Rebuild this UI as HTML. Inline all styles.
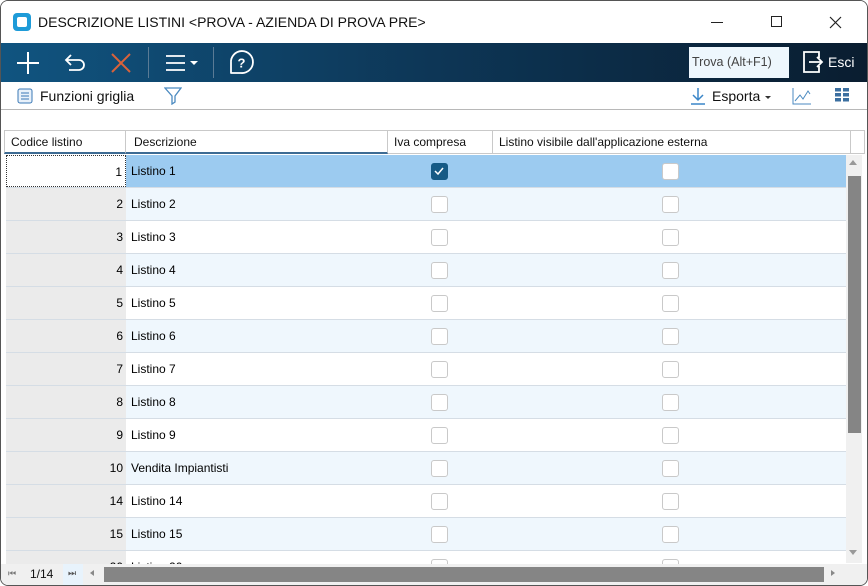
<!DOCTYPE html><html><head><style>
*{margin:0;padding:0;box-sizing:border-box}
body{width:868px;height:586px;background:#fff;font-family:"Liberation Sans","DejaVu Sans",sans-serif;position:relative;overflow:hidden}
.win{position:absolute;left:0;top:0;width:868px;height:586px;border:1px solid #555;border-radius:8px;overflow:hidden;background:#fff}
.abs{position:absolute}
.title{left:0;top:0;width:866px;height:42px;background:#fff}
.tb{left:0;top:42px;width:866px;height:39px;background:linear-gradient(90deg,#105480,#0d3656 50%,#0a1d30)}
.sb{left:0;top:81px;width:866px;height:28px;border-bottom:1px solid #b8b8b8}
.hdr{top:129px;height:24px;font-size:12px;color:#111;border-right:1px solid #c9c9c9;border-top:1px solid #c9c9c9;border-bottom:2px solid #3d6b93;padding:4px 6px;background:#fff}
.row{position:absolute;left:5px;width:840px;height:33px;border-bottom:1px solid #d5dde5;font-size:12px}
.code{position:absolute;left:0;width:120px;height:32px;background:#ebebeb;text-align:right;padding:9px 3px 0 0}
.desc{position:absolute;left:125px;top:9px}
.cb{position:absolute;width:17px;height:17px;border:1.5px solid #c9c9c9;border-radius:3px;background:#fff;top:8px}
</style></head><body><div class="win">
<div class="abs title">
 <div class="abs" style="left:12px;top:12px;width:18px;height:18px;background:#1e9bd8;border-radius:4px"><div class="abs" style="left:4px;top:4px;width:10px;height:10px;background:#fff;border-radius:2px"></div></div>
 <div class="abs" style="left:37px;top:13px;font-size:14px;color:#111">DESCRIZIONE LISTINI &lt;PROVA - AZIENDA DI PROVA PRE&gt;</div>
 <div class="abs" style="left:710px;top:21px;width:12px;height:1px;background:#222"></div>
 <div class="abs" style="left:770px;top:15px;width:11px;height:11px;border:1px solid #222"></div>
 <svg class="abs" style="left:828px;top:15px" width="13" height="13"><path d="M1 1L12 12M12 1L1 12" stroke="#222" stroke-width="1.2"/></svg>
</div>
<div class="abs tb">
 <svg class="abs" style="left:14px;top:7px" width="26" height="26"><path d="M13 2V24M2 13H24" stroke="#fff" stroke-width="2"/></svg>
 <svg class="abs" style="left:62px;top:9px" width="26" height="22"><path d="M8 3L3 8L8 13M3 8H16a5 5 0 0 1 0 10H6" stroke="#fff" stroke-width="1.8" fill="none"/></svg>
 <svg class="abs" style="left:109px;top:9px" width="22" height="22"><path d="M2 2L20 20M20 2L2 20" stroke="#d9623a" stroke-width="2"/></svg>
 <div class="abs" style="left:147px;top:4px;width:1px;height:31px;background:#5a7b95"></div>
 <svg class="abs" style="left:164px;top:10px" width="36" height="20"><path d="M1 3H20M1 10H20M1 17H20" stroke="#fff" stroke-width="1.8"/><path d="M25 8H33L29 12Z" fill="#fff"/></svg>
 <div class="abs" style="left:212px;top:4px;width:1px;height:31px;background:#5a7b95"></div>
 <svg class="abs" style="left:227px;top:6px" width="27" height="27"><path d="M13 24H3V14A11 11 0 1 1 13 24Z" stroke="#fff" stroke-width="1.8" fill="none" stroke-linejoin="round"/><text x="13.5" y="18.5" font-size="13" font-weight="bold" fill="#fff" text-anchor="middle" font-family="Liberation Sans">?</text></svg>
 <div class="abs" style="left:688px;top:4px;width:100px;height:31px;background:#eef7fd;font-size:12.5px;color:#444;padding:8px 3px">Trova (Alt+F1)</div>
 <svg class="abs" style="left:800px;top:7px" width="24" height="24"><path d="M10 2H3V22H18V16M18 8V2H10" stroke="#fff" stroke-width="1.8" fill="none"/><path d="M8 12H21M16 7L21 12L16 17" stroke="#fff" stroke-width="1.8" fill="none"/></svg>
 <div class="abs" style="left:827px;top:11px;font-size:14px;color:#fff">Esci</div>
</div>
<div class="abs sb">
 <svg class="abs" style="left:16px;top:6px" width="16" height="16"><rect x="1" y="1" width="14" height="14" rx="2" stroke="#3a78b5" fill="#e8f1fa"/><path d="M4 5H12M4 8H12M4 11H12" stroke="#3a78b5"/></svg>
 <div class="abs" style="left:39px;top:6px;font-size:14px;color:#111">Funzioni griglia</div>
 <svg class="abs" style="left:163px;top:5px" width="18" height="18"><path d="M1 1H17L11 9V15L8 17V9Z" stroke="#4b8ac0" fill="none" stroke-width="1.3"/></svg>
 <svg class="abs" style="left:688px;top:5px" width="18" height="18"><path d="M9 1V13M4 8L9 13L14 8M2 17H16" stroke="#3a86c8" stroke-width="1.5" fill="none"/></svg>
 <div class="abs" style="left:711px;top:6px;font-size:14px;color:#111">Esporta</div>
 <div class="abs" style="left:764px;top:14px;border:3px solid transparent;border-top:3px solid #333"></div>
 <svg class="abs" style="left:791px;top:5px" width="20" height="18"><path d="M1 1V17H19" stroke="#4b8ac0" fill="none"/><path d="M3 14L8 8L11 12L16 4L18 7" stroke="#4b8ac0" fill="none"/></svg>
 <svg class="abs" style="left:834px;top:6px" width="14" height="14"><rect x="0" y="0" width="6" height="3.5" fill="#3b6fa0"/><rect x="8" y="0" width="6" height="3.5" fill="#3b6fa0"/><rect x="0" y="5" width="6" height="3.5" fill="#3b6fa0"/><rect x="8" y="5" width="6" height="3.5" fill="#3b6fa0"/><rect x="0" y="10" width="6" height="3.5" fill="#3b6fa0"/><rect x="8" y="10" width="6" height="3.5" fill="#3b6fa0"/></svg>
</div>
<div class="abs hdr" style="left:3px;width:122px;border-left:1px solid #c9c9c9">Codice listino</div>
<div class="abs hdr" style="left:125px;width:262px;padding-left:8px">Descrizione</div>
<div class="abs hdr" style="left:387px;width:105px;border-bottom:1px solid #c9c9c9">Iva compresa</div>
<div class="abs hdr" style="left:492px;width:358px;border-bottom:1px solid #c9c9c9">Listino visibile dall'applicazione esterna</div>
<div class="abs hdr" style="left:850px;width:14px;border-bottom:1px solid #c9c9c9"></div>
<div id="rows"></div>
<div class="abs" style="left:845px;top:154px;width:16px;height:408px;background:#f0f0f0"></div>
<div class="abs" style="left:848px;top:159px;border:4px solid transparent;border-bottom:5px solid #999;border-top:0"></div>
<div class="abs" style="left:847px;top:175px;width:13px;height:257px;background:#858585"></div>
<div class="abs" style="left:848px;top:549px;border:4px solid transparent;border-top:5px solid #999;border-bottom:0"></div>
<div class="abs" style="left:0;top:563px;width:866px;height:21px;background:#f0f0f0"></div>
<div class="abs" style="left:7px;top:567px;font-size:9px;color:#777">⏮</div>
<div class="abs" style="left:29px;top:566px;font-size:12px;color:#111">1/14</div>
<div class="abs" style="left:62px;top:563px;width:20px;height:21px;background:#e8f3fc"></div>
<div class="abs" style="left:67px;top:567px;font-size:9px;color:#555">⏭</div>
<div class="abs" style="left:89px;top:569px;border:3px solid transparent;border-right:4px solid #888;border-left:0"></div>
<div class="abs" style="left:103px;top:566px;width:720px;height:15px;background:#858585"></div>
<div class="abs" style="left:830px;top:569px;border:3px solid transparent;border-left:4px solid #888;border-right:0"></div>
</div>
<script>
var d=[["1","Listino 1"],["2","Listino 2"],["3","Listino 3"],["4","Listino 4"],["5","Listino 5"],["6","Listino 6"],["7","Listino 7"],["8","Listino 8"],["9","Listino 9"],["10","Vendita Impiantisti"],["14","Listino 14"],["15","Listino 15"],["20","Listino 20"]];
var h="";d.forEach(function(r,i){var y=154+i*33;var bg=i==0?"#9ccbf0":(i%2?"#eff7fd":"#fff");
var c1=i==0?'<div class="cb" style="left:425px;background:#165a85;border-color:#165a85"><svg width="14" height="14" style="position:absolute;left:0;top:0"><path d="M3 7L6 10L11 4" stroke="#fff" stroke-width="1.5" fill="none"/></svg></div>':'<div class="cb" style="left:425px"></div>';
h+='<div class="row" style="top:'+y+'px;background:'+bg+'"><div class="code" style="'+(i==0?'background:#fff;border:1px dotted #333':'')+'">'+r[0]+'</div><div class="desc">'+r[1]+'</div>'+c1+'<div class="cb" style="left:656px"></div></div>';});
document.getElementById("rows").innerHTML=h;
</script>
</body></html>
